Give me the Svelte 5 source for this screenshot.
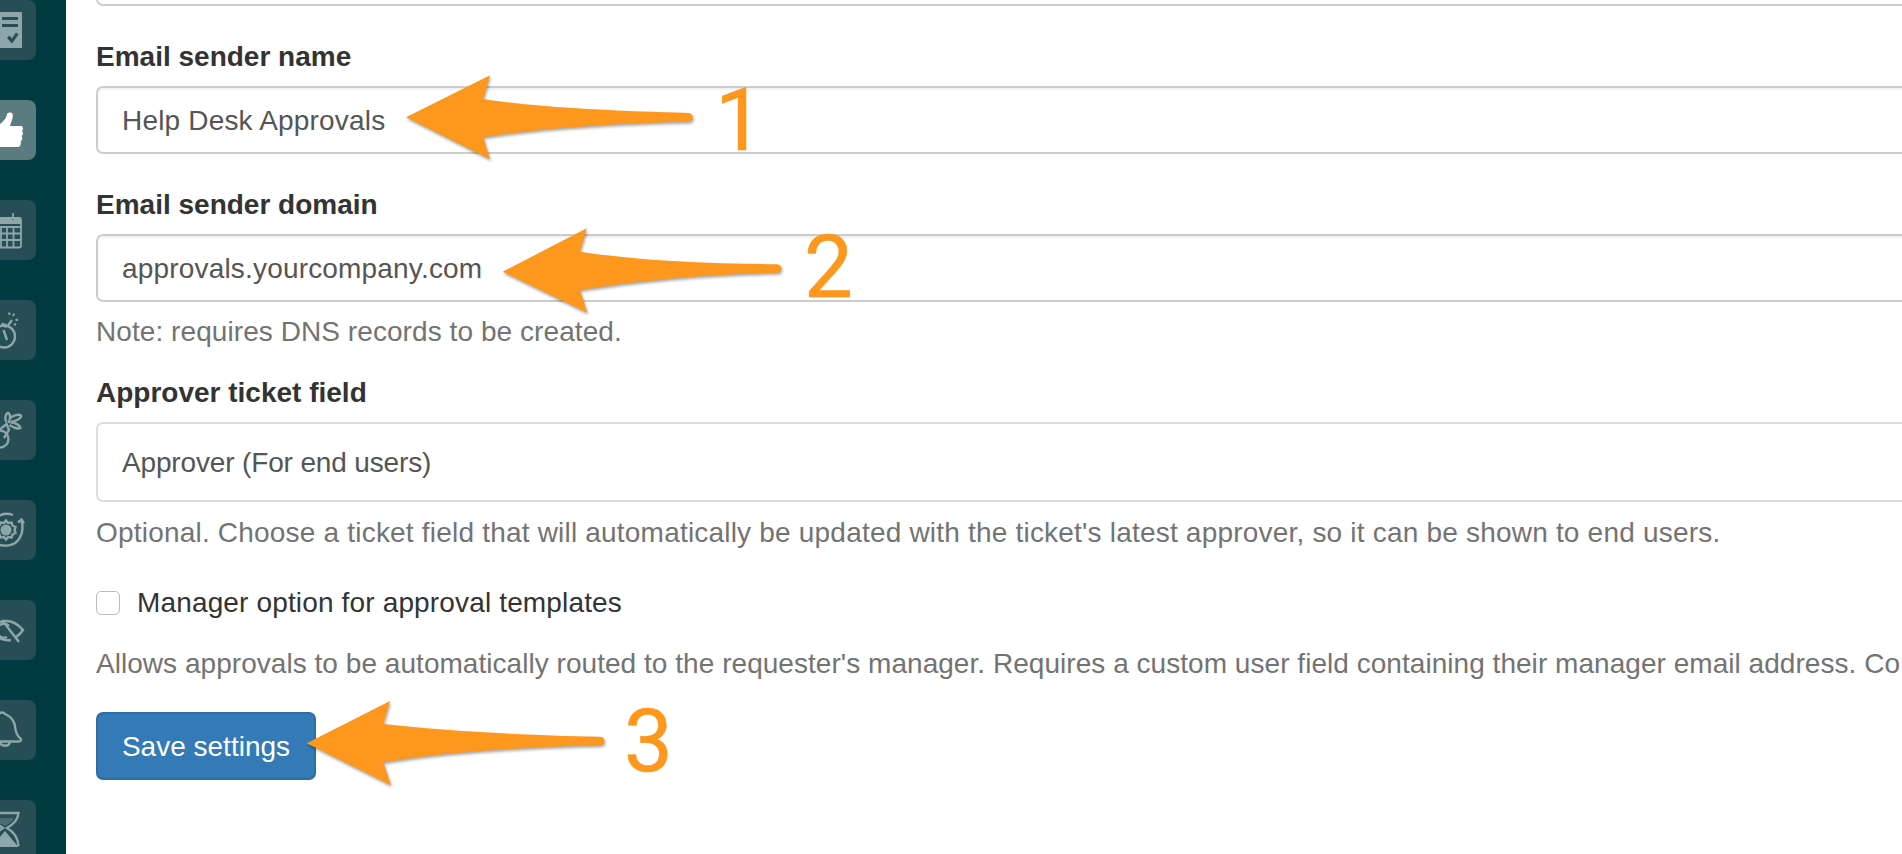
<script>
  const arrows = [
    { d: 'M406 117.3 L490 75.3 L483.3 99 C540 108 620 111 688 113 C694 113 695 121.5 688 121.7 C620 123 540 128 483.3 137.3 L490 159.3 Z' },
    { d: 'M502.7 271.7 L586.7 228.3 L580 251.7 C640 261 710 263.5 777 264.2 C783 264.5 783 272.5 777 272.7 C710 274 640 280 580 290 L587.3 312.7 Z' },
    { d: 'M306.7 743.3 L390 701 L383.3 724 C445 731 530 735.5 600 736.8 C606 737 606 745 600 745.2 C530 746.5 445 752 383.3 762.3 L391 785.3 Z' }
  ];
  const digits = [
    { t: '1', x: 715, y: 150 },
    { t: '2', x: 804, y: 297 },
    { t: '3', x: 624, y: 771 }
  ];
</script>

<div class="page">
  <nav class="rail">
    <div class="tile">
      <svg viewBox="-24 0 60 60"><path class="fill" fill-rule="evenodd" d="M-10 12 H21 a1 1 0 0 1 1 1 V47 a1 1 0 0 1 -1 1 H-10 Z M2 17 V20 H18 V17 Z M2 24 V27 H18 V24 Z M7 38 L9.500 35.500 L12 38.500 L16 32.500 L18.500 34.500 L12 43.500 Z"/></svg>
    </div>
    <div class="tile active">
      <svg viewBox="-24 0 60 60"><path fill="#fff" d="M-10 30 L-2 26 C2 22 6 20 7 14 C8 12 12 12 12.5 14 C13.5 18 11 22 10 26 L21 26 C23.5 26 23.5 30 22 31 C23.5 33 23 35 21.5 36 C23 38 22 41 20.5 41.5 C21.5 44 20 47 18 47 L4 47 C0 47 -2 47 -4 46 L-10 46 Z"/></svg>
    </div>
    <div class="tile">
      <svg viewBox="-24 0 60 60"><g class="line"><rect x="-8" y="18" width="29" height="29.5" rx="1.5"/><path d="M-8 27H21M-8 33.5H21M-8 40H21M1 27V47.5M7 27V47.5M13.5 27V47.5"/><path d="M13 13V19"/></g><path class="fill" d="M-8 17H10.5A2.5 2.5 0 0 0 15.5 17H19.5A1.5 1.5 0 0 1 21 18.5V24H-8Z"/></svg>
    </div>
    <div class="tile">
      <svg viewBox="-24 0 60 60"><g class="line thick"><circle cx="4" cy="36.5" r="11"/><path d="M3.5 30L7 40M8 25.5L12 20"/></g><path class="fill" d="M2 22.5L7.5 24.5L6 28L0.5 26Z"/><g class="spark"><path d="M9 12.5L9.6 15M14 13.5L13.2 16M18 19.5L15.5 20.3M16 25L14 24"/></g></svg>
    </div>
    <div class="tile">
      <svg viewBox="-24 0 60 60"><g class="line thick"><circle cx="0" cy="39" r="8.5"/><path d="M6.5 22C4 18 6 13 8.5 13C10.5 14 10.5 19 8.5 23M9.5 19C13 15 19 14 21 15.5C22 18 16 21.5 10.5 22M10.5 22.5C15 22.5 20 25 20.5 28C18.5 29.5 13 27.5 9.5 25M-2 31L6.5 24L9 30L4 38"/></g></svg>
    </div>
    <div class="tile">
      <svg viewBox="-24 0 60 60"><circle class="fill" cx="6" cy="30" r="5.5"/><g class="line thick"><path d="M6 20.5L8 23L11.5 22.5L12.5 25.5L15.5 27L14.5 30L15.5 33L12.5 34.500L11.500 37.500L8 37L6 39.500L4 37L.5 37.500L-.5 34.500L-3.500 33L-2.500 30L-3.500 27L-.5 25.500L.5 22.500L4 23Z"/><path d="M-6 41C-1 47 13 48 19 39C23 33 23 26 21.500 20.500M-3 17C2 13.500 8 13 13 15"/><path d="M18 22.500L21.500 19.500L24 23.500"/></g></svg>
    </div>
    <div class="tile">
      <svg viewBox="-24 0 60 60"><g class="line thick"><path d="M-10 30C-2 19 12 17 23 30C21 33 18 36 15 38"/><path d="M-10 30C-4 38 4 41 11 40"/><path d="M2 20L19 42"/><path d="M9 26A7 7 0 1 0 7 37"/></g></svg>
    </div>
    <div class="tile">
      <svg viewBox="-24 0 60 60"><g class="line thick"><path d="M-1 14C0 12 4 12 5 14C10 16 14 20 15 26C15.500 32 17 36 20.500 38.500C21.500 40 21 41.500 19 41.500H-14"/><path d="M-1 14C-6 16 -10 20 -11 26C-11.500 32 -13 36 -16 38.500"/><path d="M0 42C1 47 9 47 10 42"/></g></svg>
    </div>
    <div class="tile">
      <svg viewBox="-24 0 60 60"><g class="line thick"><path d="M-9 13H18.500C18 20 14 24 7 28C14 32 18 37 18.500 46"/><path d="M-9 13C-9 20 -3 24 3 28C-3 32 -9 37 -9 46"/></g><path class="fill" d="M5 31L18.500 47H-9Z"/><path class="fill" d="M-5 18H14C12 22 9 24 5 26C1 24 -3 22 -5 18Z" opacity=".35"/></svg>
    </div>
  </nav>

  <main class="content">
    <div class="control cut"></div>

    <div class="label first">Email sender name</div>
    <div class="control">Help Desk Approvals</div>

    <div class="label second">Email sender domain</div>
    <div class="control">approvals.yourcompany.com</div>
    <p class="help note">Note: requires DNS records to be created.</p>

    <div class="label third">Approver ticket field</div>
    <div class="control select">Approver (For end users)</div>
    <p class="help optional">Optional. Choose a ticket field that will automatically be updated with the ticket's latest approver, so it can be shown to end users.</p>

    <label class="check"><input type="checkbox" /><span>Manager option for approval templates</span></label>
    <p class="help allows">Allows approvals to be automatically routed to the requester's manager. Requires a custom user field containing their manager email address. Co</p>

    <button class="save">Save settings</button>
  </main>

  <svg class="notes" viewBox="0 0 1902 854">
    {#each arrows as a}
      <path class="arrow" d={a.d} />
    {/each}
    {#each digits as n}
      <text x={n.x} y={n.y}>{n.t}</text>
    {/each}
  </svg>
</div>

<style>
  :global(body) {
    margin: 0;
    background: #fff;
  }
  .page {
    position: relative;
    display: flex;
    width: 1902px;
    height: 854px;
    overflow: hidden;
    font-family: "Liberation Sans", Arial, sans-serif;
    font-size: 28px;
    color: #333;
  }
  .rail {
    flex: 0 0 66px;
    display: flex;
    flex-direction: column;
    gap: 40px;
    background: #023a41;
  }
  .tile {
    flex: 0 0 60px;
    width: 60px;
    margin-left: -24px;
    border-radius: 8px;
    background: #264e54;
  }
  .tile.active {
    background: #5b7c7f;
  }
  .tile svg {
    display: block;
    width: 60px;
    height: 60px;
  }
  .fill {
    fill: #8da6a9;
  }
  .line {
    fill: none;
    stroke: #8da6a9;
    stroke-width: 1.8;
  }
  .line.thick {
    stroke-width: 2.4;
  }
  .spark {
    fill: none;
    stroke: #8da6a9;
    stroke-width: 2;
  }
  .content {
    flex: 1;
    min-width: 0;
    padding-left: 30px;
  }
  .control {
    box-sizing: border-box;
    width: 1900px;
    height: 68px;
    padding: 2px 20px 0 24px;
    display: flex;
    align-items: center;
    border: 2px solid #ccc;
    border-radius: 7px;
    background: #fff;
    color: #555;
    letter-spacing: 0.18px;
    box-shadow: inset 0 2px 2px rgba(0, 0, 0, 0.06);
    white-space: nowrap;
  }
  .control.cut {
    height: 60px;
    margin-top: -54px;
  }
  .control.select {
    height: 80px;
    border-color: #ddd;
    box-shadow: none;
    letter-spacing: -0.15px;
  }
  .label {
    font-weight: 700;
    line-height: 34px;
    margin-bottom: 12px;
  }
  .label.first {
    margin-top: 34px;
  }
  .label.second {
    margin-top: 34px;
  }
  .label.third {
    margin-top: 27px;
  }
  .help {
    margin: 0;
    color: #737373;
    line-height: 34px;
    white-space: nowrap;
  }
  .help.note {
    margin-top: 13px;
    letter-spacing: 0.07px;
  }
  .help.optional {
    margin-top: 14px;
    letter-spacing: 0.2px;
  }
  .help.allows {
    margin-top: 32px;
    letter-spacing: 0.04px;
  }
  .check {
    display: flex;
    align-items: center;
    gap: 17px;
    margin-top: 41px;
    height: 24px;
    color: #333;
    letter-spacing: 0.15px;
  }
  .check input {
    appearance: none;
    box-sizing: border-box;
    width: 24px;
    height: 24px;
    margin: 0;
    border: 1.5px solid #bcbcbc;
    border-radius: 5px;
    background: #fff;
  }
  .save {
    display: block;
    box-sizing: border-box;
    width: 220px;
    height: 68px;
    margin-top: 31px;
    padding: 2px 0 0;
    border: 2px solid #2e6da4;
    border-radius: 7px;
    background: #337ab7;
    color: #fff;
    font: inherit;
  }
  .notes {
    position: absolute;
    left: 0;
    top: 0;
    width: 1902px;
    height: 854px;
    pointer-events: none;
  }
  .arrow {
    fill: #fd971d;
    filter: drop-shadow(1px 2px 1.5px rgba(0, 0, 0, 0.35));
  }
  .notes text {
    fill: #fd971d;
    stroke: #fd971d;
    stroke-width: 0.6px;
    font-family: Roboto, "Liberation Sans", sans-serif;
    font-size: 87px;
  }
</style>
